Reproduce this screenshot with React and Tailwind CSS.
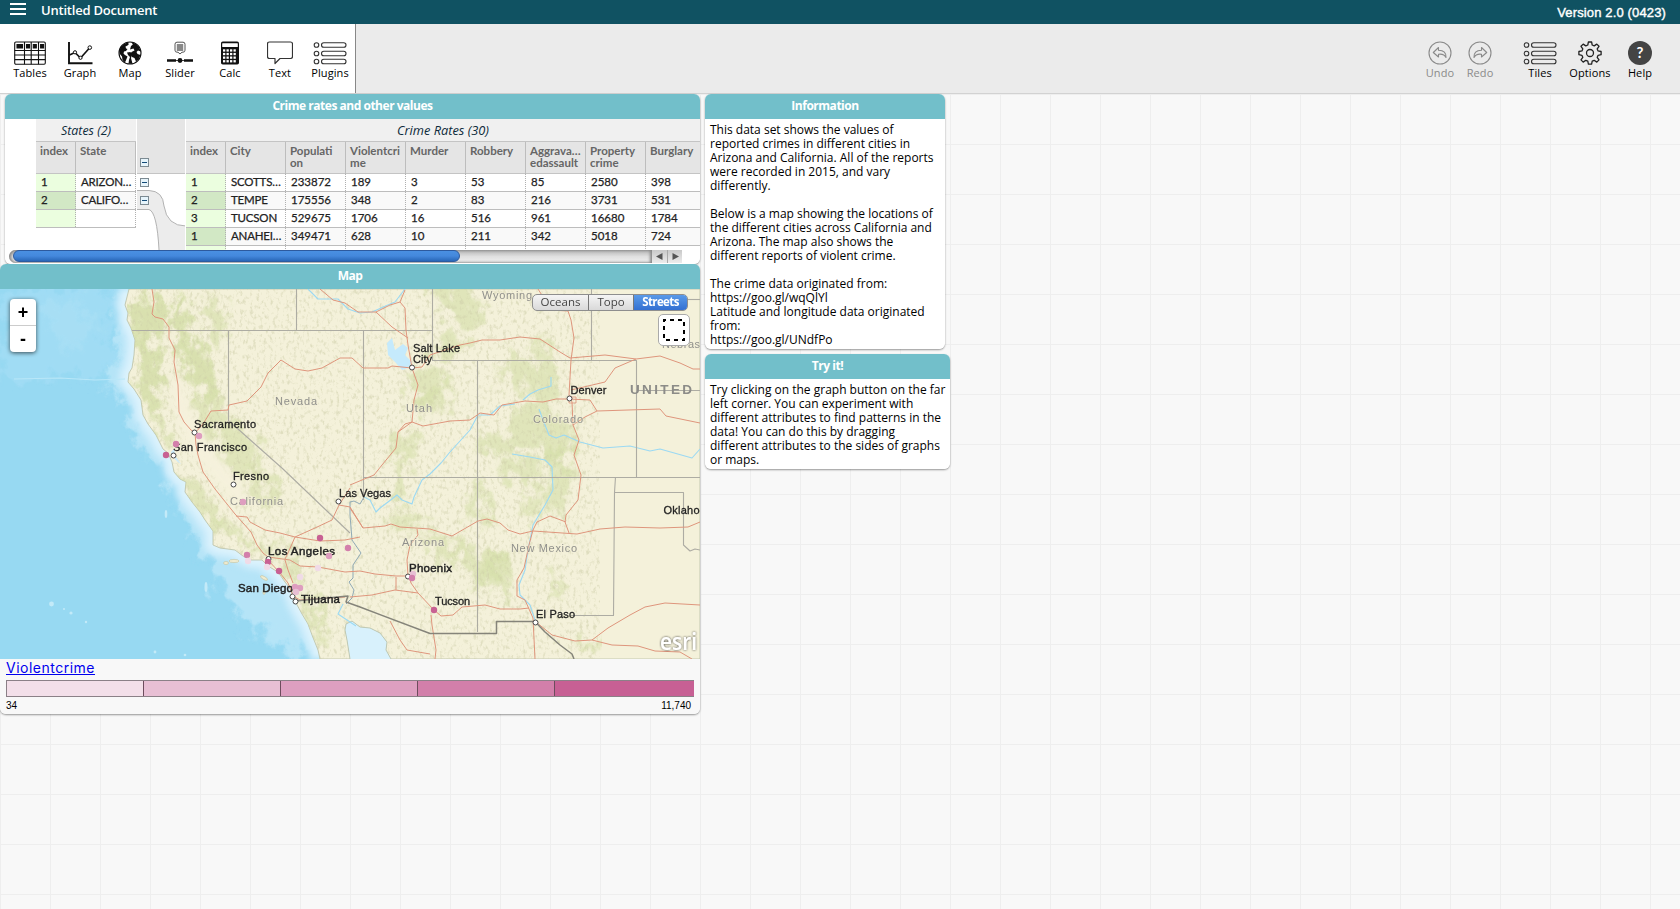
import React from "react";

const GREENS = [
  [148, 320, 20, 34, 8], [150, 375, 15, 40, -6], [160, 425, 10, 26, -25], [182, 325, 10, 34, 0], [200, 370, 16, 38, -25],
  [212, 412, 17, 28, -20], [238, 450, 20, 34, -30], [262, 490, 14, 30, -35], [198, 500, 14, 42, -38], [225, 530, 24, 10, 15],
  [262, 548, 22, 7, 5], [292, 570, 10, 22, -20], [318, 620, 9, 34, -25], [216, 320, 14, 30, 0], [460, 305, 34, 18, 30],
  [448, 345, 22, 12, 0], [425, 385, 22, 20, 0], [405, 450, 14, 26, 20], [435, 400, 24, 12, 0], [518, 370, 20, 24, 20],
  [545, 385, 16, 34, 0], [528, 425, 26, 24, 20], [560, 440, 16, 30, -10], [500, 445, 22, 14, 0], [520, 470, 28, 12, 0],
  [558, 478, 13, 40, 8], [535, 505, 9, 22, 0], [478, 505, 10, 28, 0], [410, 522, 26, 10, 0], [440, 548, 30, 11, 25],
  [478, 562, 28, 18, 30], [495, 575, 18, 22, 0], [556, 583, 6, 17, 0], [400, 488, 10, 22, 0], [545, 345, 8, 14, 0],
  [590, 648, 14, 8, 0],
];

const ROADS = [
  "152,289 154,302 152,314 155,317 163,319 169,327 169,338 175,350 174,362 178,385 179,412 184,422 191,430 195,433 196,445 198,455 200,462 203,472 215,489 235,514 251,532 257,545 263,553",
  "195,433 203,424 211,411 228,410 229,405 247,401 261,387 268,373 281,360 295,369 308,371 322,368 340,358 352,358 363,368 388,368 392,366 412,368",
  "320,289 333,300 345,303 358,312 376,312 390,305 400,302 405,290",
  "400,302 405,308 406,330 408,345 412,368 418,385 414,400 412,422 398,432 396,448 382,465 374,475 350,485",
  "376,312 392,327 408,338",
  "412,368 422,367 430,355 445,350 460,345 470,343 482,340 500,340 520,337 540,339 560,352 570,358 605,355 636,359 660,356 680,363 693,369 700,369",
  "538,289 545,300 550,310 568,311 571,320 574,338 571,360 569,395 572,402 573,425 579,440 574,455 581,475 578,500 566,515 565,522 569,533",
  "569,399 590,400 597,411 660,409 666,416 700,423",
  "573,425 585,417 597,411",
  "571,390 605,382 615,368 636,359",
  "398,432 405,424 412,422 423,426 450,421 470,420 480,413 494,415 502,405 525,401 543,402 556,399 569,399",
  "350,508 363,528 385,526 391,524 400,527 430,529 452,536 478,521 487,519 500,523 508,530 520,534 533,531 577,534 600,529 625,527 660,528 688,527 700,522",
  "533,530 537,522 550,516 566,522",
  "300,566 318,567 345,572 360,571 375,574 396,576 409,576",
  "409,576 411,583 418,593 433,609 441,616 453,615 462,607 485,605 500,609 520,609 529,608",
  "431,615 432,625 436,650 435,659",
  "350,597 372,595 395,590 418,593",
  "408,576 407,560 410,545 418,535 417,529",
  "396,590 396,577",
  "390,621 400,640 407,650 430,654",
  "533,530 529,545 524,568 517,580 517,596 525,600 533,618 535,659",
  "536,622 552,635 575,641 592,640 608,628 630,615 645,607 665,603 700,605",
  "592,640 612,645 638,646 655,651 680,652 692,659",
  "236,516 247,517 250,522 265,530 280,533 295,537 315,528 332,520 339,505 350,488",
  "295,537 320,541 345,540 360,537",
  "295,537 288,553 285,559",
  "263,553 268,557 290,560 300,566",
  "268,560 280,573 288,583 293,596 300,600 345,597",
  "285,560 288,570 293,583",
  "339,505 350,507 360,523 363,528",
];

const RIVERS = [
  "551,377 551,386 538,390 530,394 523,400",
  "515,404 500,406 490,415 478,415 470,430 450,452 441,463 430,474 422,480 414,497 412,504 402,500 397,495 388,502 380,508 376,512 370,500 364,497",
  "512,454 530,457 545,460 552,467 553,490 545,505 533,525 528,550 525,570 519,585 520,595 530,605 535,620",
  "539,409 543,420 549,435 556,438 564,435 580,442 603,448 630,446 650,451 660,449 692,458 700,449",
  "308,289 318,299 338,299 348,309 360,313 372,312 395,302 405,289",
  "343,604 338,614 350,622 356,626",
];

const BORDERS = [
  "132,330.5 432.5,330.5", "296.5,289 296.5,330", "228.5,330 228.5,421 238,429 283,469 350,533",
  "363.5,330 363.5,500", "432.5,289 432.5,360.5 636.5,360.5 636.5,477.5", "477.5,360 477.5,632",
  "363,477.5 700,477.5", "591.5,289 591.5,360", "688,299.5 700,299.5", "636,390.5 700,390.5",
  "615.5,477 614.5,492.5 613.5,615.5 571,615.5", "614,492.5 683.5,492.5 683.5,545 690,551 695,549 700,550",
];

const LAND =
  "M129 289L127 297L125 305L128 313L127 320L131 328L135 340L134 355L132 368L129 373L128 382L134 389L141 400L143 415L148 424L156 435L160 443L163 449L168 453L172 462L174 472L180 479L186 482L185 492L192 502L200 512L205 520L213 531L213 545L220 548L235 550L243 556L251 560L262 560L268 566L278 572L285 582L292 591L296 603L302 614L308 624L312 635L318 650L320 659L350 659L347 640L345 630L346 624L352 621L360 627L370 628L380 633L387 642L386 650L391 659L700 659L700 289Z";
const COAST = LAND.split("L350 659")[0];

const CITIES = [
  [412, 367.5], [569.5, 398.5], [194.5, 432.5], [173.5, 455.5], [233.5, 484.5], [338.5, 501.5],
  [268.5, 559], [408, 576.5], [292.5, 596.5], [295.5, 601.5], [535.5, 622.5],
];

const POINTS = [
  [199, 436, "#de9dbf"], [176, 444, "#d37fab"], [166, 455, "#c86193"], [243, 502, "#de9dbf"], [320, 538, "#c86193"],
  [348, 548, "#d37fab"], [329, 556, "#de9dbf"], [247, 555, "#d37fab"], [248, 561, "#f0dbe7"], [268, 562, "#c86193"],
  [267, 567, "#f0dbe7"], [279, 571, "#c86193"], [318, 568, "#f0dbe7"], [300, 577, "#f0dbe7"], [295, 587, "#de9dbf"],
  [300, 588, "#de9dbf"], [296, 592, "#e8bfd4"], [413, 574, "#e8bfd4"], [412, 578, "#d37fab"], [434, 610, "#c86193"],
];

const CITY_LABELS = [
  ["Salt Lake", 413, 352, 47, 11], ["City", 413, 363, 19, 11], ["Denver", 570.5, 394, 36, 11], ["Sacramento", 194, 428, 62, 11],
  ["San Francisco", 173, 451, 74, 11], ["Fresno", 233, 480, 36, 11], ["Las Vegas", 339, 497, 52, 11],
  ["Los Angeles", 268, 555, 67, 11.5], ["San Diego", 238, 592, 55, 11.5], ["Tijuana", 301, 603, 39, 11.5],
  ["Phoenix", 409, 572, 43, 11.5], ["Tucson", 435, 605, 35, 11], ["El Paso", 536, 618, 39, 11], ["Oklaho", 663.5, 514, 36, 11],
];

const STATE_LABELS = [
  ["Nevada", 275, 405, 42], ["Utah", 406, 412, 26], ["Colorado", 533, 423, 50], ["Wyoming", 482, 299, 50],
  ["California", 230, 505, 53], ["Arizona", 402, 546, 42], ["New Mexico", 511, 552, 66], ["Nebras", 662, 348, 38],
];

function MapView() {
  return (
    <svg className="block h-[370px] w-[700px]" viewBox="0 289 700 370" fontFamily="'Liberation Sans', Arial, sans-serif">
      <defs>
        <clipPath id="land"><path d={LAND} /></clipPath>
        <filter id="soft" x="-30%" y="-30%" width="160%" height="160%"><feGaussianBlur stdDeviation="3" /></filter>
        <filter id="sea" x="-30%" y="-30%" width="160%" height="160%"><feGaussianBlur stdDeviation="3" /></filter>
        <filter id="mottle" x="0" y="0" width="100%" height="100%">
          <feTurbulence type="fractalNoise" baseFrequency="0.07 0.06" numOctaves="5" seed="8" result="n" />
          <feDisplacementMap in="SourceGraphic" in2="n" scale="44" xChannelSelector="R" yChannelSelector="G" />
        </filter>
        <filter id="relief" x="0" y="0" width="100%" height="100%">
          <feTurbulence type="fractalNoise" baseFrequency="0.3 0.2" numOctaves="4" seed="3" />
          <feColorMatrix values="0 0 0 0 0.62  0 0 0 0 0.62  0 0 0 0 0.4  3.4 0 0 0 -1.75" />
        </filter>
        <filter id="halo" x="-20%" y="-20%" width="140%" height="150%">
          <feDropShadow dx="0" dy="0" stdDeviation="1.2" floodColor="#222" floodOpacity="0.9" />
        </filter>
      </defs>
      <rect x="0" y="289" width="700" height="370" fill="#97d9f2" />
      <g filter="url(#mottle)">
        <path d="M0 289H112L108 330L112 368L95 378L60 379L0 380Z" fill="#a0dcf4" filter="url(#sea)" />
        <path d="M45 305L72 298L98 318L92 340L70 352L48 335Z" fill="#aae0f5" opacity="0.7" filter="url(#sea)" />
        <path d="M118 289L118 350L105 380L125 405L140 445L165 470L178 500L195 540L215 575L240 620L285 650L330 659L330 560L200 480L150 400L140 289Z" fill="#b5e4f7" filter="url(#sea)" />
      </g>
      <g fill="none" strokeLinejoin="round" filter="url(#sea)">
        <path d={COAST} stroke="#cdecfb" strokeWidth="20" />
        <path d={COAST} stroke="#dff4fd" strokeWidth="8" />
      </g>
      <path d="M14 379L60 378L95 380L125 379" stroke="#b9e7f8" strokeWidth="1.2" fill="none" />
      <g fill="#c3eaf8"><circle cx="51.500" cy="604" r="2.4" /><circle cx="71" cy="613" r="1.6" /><circle cx="64" cy="609" r="1" /><circle cx="86" cy="622" r="1.2" /><circle cx="155" cy="652" r="1.4" /><circle cx="185" cy="655" r="1.3" /><ellipse cx="166" cy="514" rx="1.300" ry="4" /><ellipse cx="206" cy="587" rx="1.500" ry="5" /></g>
      <path d="M350 659L347 640L345 630L346 624L352 621L360 627L370 628L380 633L387 642L386 650L391 659Z" fill="#d8f1fc" />
      <path d={LAND} fill="#f4f1da" stroke="#b9bfa6" strokeWidth="0.8" />
      <g clipPath="url(#land)">
        <g filter="url(#mottle)">
          {GREENS.map(([x, y, rx, ry, a], i) => (
            <ellipse key={i} cx={x} cy={y} rx={rx * 0.85} ry={ry * 0.85} fill="#d2dda4" opacity={x < 215 && y < 400 ? 0.8 : 0.58} transform={`rotate(${a} ${x} ${y})`} filter="url(#soft)" />
          ))}
        </g>
        <rect x="120" y="289" width="480" height="370" filter="url(#relief)" opacity="0.55" />
        <path d="M178 372L186 395L196 425L215 455L245 490L240 505L215 480L190 448L176 415L170 385Z" fill="#f5f1dc" filter="url(#soft)" />
      </g>
      <g fill="#f0ecd0" stroke="#c5c3a0" strokeWidth="0.6">
        <ellipse cx="234" cy="561" rx="5" ry="1.6" /><ellipse cx="226" cy="563" rx="2.500" ry="1.500" />
        <ellipse cx="264" cy="578" rx="4" ry="1.500" transform="rotate(30 264 578)" /><ellipse cx="264" cy="592" rx="1.200" ry="2.500" />
      </g>
      <path d="M171 452L174 449L176 457L181 464L178 462L172 456Z" fill="#cbeafb" />
      <path d="M387 343L392 338L395 350L403 344L408 348L405 355L412 362L408 368L402 370L396 363L388 355Z" fill="#c5eafc" />
      <g fill="none" strokeLinejoin="round">
        {RIVERS.map((p) => <polyline key={p} points={p} stroke="#9bd9f3" strokeWidth="1.1" />)}
        <polyline points="364,497 360,504 354,501 350,502 350,515 352,540 361,553 353,565 353,578 349,582 354,590 352,598 346,604" stroke="#8fa9b5" strokeWidth="1" />
        {BORDERS.map((p) => <polyline key={p} points={p} stroke="#adaca3" strokeWidth="1.1" />)}
        {ROADS.map((p) => <polyline key={p} points={p} stroke="#de957c" strokeWidth="1" />)}
        <path d="M569 397h7v6h-7z" stroke="#de957c" strokeWidth="0.8" />
        <polyline points="296,601 348,596 346,602 360,607 430,633.500 496.500,633.500 496.500,621.500 535,621.500 545,632 560,645 572,654 574,659" stroke="#85847a" strokeWidth="1.5" />
      </g>
      {STATE_LABELS.map(([t, x, y, w]) => (
        <text key={t} x={x} y={y} textLength={w} fontSize="11" fill="#90908c" stroke="#f3f0d8" strokeWidth="1.500" strokeOpacity="0.5" paintOrder="stroke">{t}</text>
      ))}
      <text x="630" y="394" textLength="62" fontSize="13.500" fontWeight="bold" fill="#8c8c88">UNITED</text>
      {CITIES.map(([x, y]) => <circle key={x} cx={x} cy={y} r="2.500" fill="#fff" stroke="#444" strokeWidth="1" />)}
      {CITY_LABELS.map(([t, x, y, w, s]) => (
        <text key={t} x={x} y={y} textLength={w} fontSize={s} fill="#222" stroke="#222" strokeWidth={s > 11 ? 0.45 : 0.3}>{t}</text>
      ))}
      {POINTS.map(([x, y, c]) => <circle key={`${x}-${y}`} cx={x} cy={y} r="3.200" fill={c} />)}
      <text x="660" y="650" fontSize="22.500" fontWeight="600" fontFamily="'Open Sans', sans-serif" textLength="37" lengthAdjust="spacingAndGlyphs" fill="#fff" filter="url(#halo)">esri</text>
    </svg>
  );
}

const ListIcon = () => (
  <svg className="h-6 w-[34px]" viewBox="0 0 34 24" fill="none" stroke="#333" strokeWidth="1.1">
    {[4, 12.5, 20.5].map((y) => (
      <g key={y}><circle cx="3.500" cy={y} r="2.300" /><rect x="8.500" y={y - 2.300} width="24.500" height="4.600" rx="2.300" /></g>
    ))}
  </svg>
);

const ICONS = {
  tables: (
    <svg className="h-6 w-8" viewBox="0 0 32 24" fill="none" stroke="#111" strokeWidth="1.100">
      <rect x="0.700" y="1" width="30.600" height="22.300" rx="1.200" />
      <path d="M0.700 9.500H31.300M0.700 14H31.300M0.700 18.600H31.300M10.500 1V23.300M17.200 1V23.300M24.500 1V23.300" />
      <path d="M3 3.500h5.500v3.500h-5.500zM12.500 3.500h3v3.500h-3zM19.300 3.500h3v3.500h-3zM26.600 3.500h3v3.500h-3z" fill="#111" />
    </svg>
  ),
  graph: (
    <svg className="h-6 w-[26px]" viewBox="0 0 26 24" fill="none" stroke="#111">
      <path d="M2 1V22.200H25.500" strokeWidth="1.900" />
      <path d="M2.500 14L8 11.500L13.500 17L22.500 7" strokeWidth="1.600" />
      <circle cx="8" cy="11.300" r="1.600" fill="#fff" /><circle cx="13.500" cy="16.800" r="1.600" fill="#fff" /><circle cx="22.800" cy="6.600" r="1.800" fill="#fff" />
    </svg>
  ),
  map: (
    <svg className="h-6 w-6" viewBox="0 0 24 24">
      <circle cx="12" cy="12" r="11" fill="#fff" stroke="#111" strokeWidth="1.100" />
      <path d="M3 5.500L6 3L9.500 1.500L11 3L9.500 4.500L7.500 5.500L8 7.500L9.500 8L8 10L6 10.500L5.500 12.500L7 14L9.500 15.500L8.500 18L7 21.500L4.500 19L4 15.500L1.500 12.500L1.300 9Z" fill="#111" />
      <path d="M13.500 1.300L18 2.800L21 6L22.800 10.500L20 9.500L18.500 11L19.500 13L22.500 14L20.500 18.500L18 20.500L16.500 17L14 16L12.500 13L13.500 11L16.500 9.500L15.500 7.500L12 8.500L13 5L14.800 3.500Z" fill="#111" />
      <path d="M9 11.500L12.500 11L14 14L13 17L14.500 22.800H10.500L11 19L12 16L10 14Z" fill="#111" />
    </svg>
  ),
  slider: (
    <svg className="h-6 w-[26px]" viewBox="0 0 26 24">
      <path d="M10 1.200h6q2 0 2 2v6q0 2-2 2h-1l-2 1.800-2-1.800h-1q-2 0-2-2v-6q0-2 2-2Z" fill="#fff" stroke="#555" />
      <rect x="9.800" y="3" width="6.400" height="7" fill="#888" />
      <path d="M0 19.500H9M17 19.500H26" stroke="#111" strokeWidth="2.400" /><path d="M8 19.500H18" stroke="#111" strokeWidth="0.800" />
      <circle cx="13" cy="19.500" r="2.400" fill="#111" />
    </svg>
  ),
  calc: (
    <svg className="h-6 w-5" viewBox="0 0 20 24">
      <rect x="1" y="0.500" width="18" height="23" rx="1.800" fill="#111" /><rect x="2.200" y="2.300" width="15.600" height="3.800" rx="0.500" fill="#fff" />
      {[9, 12.600, 16.200, 19.800].map((y) => [3, 6.500, 10, 13.500].map((x) => <rect key={`${x}-${y}`} x={x} y={y - 0.700} width="2.300" height="2.300" fill="#fff" />))}
    </svg>
  ),
  text: (
    <svg className="h-6 w-[26px]" viewBox="0 0 26 24" fill="none" stroke="#333" strokeWidth="1.200">
      <path d="M2.500 1h21q2 0 2 2v12.500q0 2-2 2H13L8 22.500V17.500H2.500q-2 0-2-2V3q0-2 2-2Z" strokeLinejoin="round" />
    </svg>
  ),
  list: <ListIcon />,
  undo: (
    <svg className="h-6 w-6" viewBox="0 0 24 24" fill="none" stroke="#8a8a8a" strokeWidth="1.100">
      <circle cx="12" cy="12" r="11" /><path d="M10.500 6.500L5.300 11.500L10.500 16V13.300Q16 12.500 18 16.500Q18.500 9.500 10.500 9.200Z" strokeLinejoin="round" />
    </svg>
  ),
  redo: (
    <svg className="h-6 w-6 -scale-x-100" viewBox="0 0 24 24" fill="none" stroke="#8a8a8a" strokeWidth="1.100">
      <circle cx="12" cy="12" r="11" /><path d="M10.500 6.500L5.300 11.500L10.500 16V13.300Q16 12.500 18 16.500Q18.500 9.500 10.500 9.200Z" strokeLinejoin="round" />
    </svg>
  ),
  options: (
    <svg className="h-6 w-6" viewBox="0 0 24 24" fill="none" stroke="#222" strokeWidth="1.300" strokeLinejoin="round">
      <path d="M10.400 1h3.200l.6 3 2 .9 2.600-1.800 2.200 2.200-1.800 2.600.9 2 3 .6v3.200l-3 .6-.9 2 1.800 2.600-2.200 2.200-2.600-1.800-2 .9-.6 3h-3.200l-.6-3-2-.9-2.600 1.800-2.200-2.200 1.800-2.600-.9-2-3-.6v-3.200l3-.6.9-2-1.800-2.600 2.200-2.200 2.600 1.800 2-.9z" />
      <circle cx="12" cy="12" r="3.500" />
    </svg>
  ),
  help: (
    <svg className="h-6 w-6" viewBox="0 0 24 24">
      <circle cx="12" cy="12" r="12" fill="#444" />
      <text x="12" y="17.300" textAnchor="middle" fontFamily="Lato, sans-serif" fontWeight="bold" fontSize="15" fill="#fff">?</text>
    </svg>
  ),
};

function Tool({ icon, label, width = "w-[50px]", muted }) {
  return (
    <div className={`flex ${width} flex-col items-center pt-[17px] font-['Open_Sans',sans-serif] text-[11px] leading-[15px] tracking-[0.1px] ${muted ? "text-[#8a8a8a]" : "text-black"}`}>
      {ICONS[icon]}
      <span className="whitespace-nowrap">{label}</span>
    </div>
  );
}

function Card({ title, className, children }) {
  return (
    <section className={`flex flex-col overflow-hidden rounded-[6px] shadow-[0_1px_2px_rgba(0,0,0,0.4)] ${className}`}>
      <h2 className="h-[25px] shrink-0 bg-[#72bfca] text-center font-['Open_Sans',sans-serif] text-[12px] font-bold leading-[23px] tracking-[-0.48px] text-white">{title}</h2>
      {children}
    </section>
  );
}

const Collapse = () => (
  <span className="flex size-[7px] items-center justify-center bg-[#e6f4fb] outline outline-1 outline-[#7c8a92]"><span className="h-px w-[5px] bg-[#134a78]" /></span>
);

function HeadCell({ lines, w = "w-[60px]" }) {
  return (
    <div className={`${w} h-8 shrink-0 overflow-hidden whitespace-nowrap border-r border-[#bdbdbd] pl-[4px] pt-[3px] leading-3`}>
      {lines.map((l) => <div key={l}>{l}</div>)}
    </div>
  );
}

function Row({ cells, odd }) {
  return (
    <div className={`flex h-[18px] border-b border-[#bdbdbd] [-webkit-text-stroke:0.250px_#222] ${odd ? "bg-[#f9f9f9]" : "bg-white"}`}>
      {cells.map((c, i) => (
        <div
          key={i}
          className={`${i === 0 ? "w-10" : "w-[60px]"} ${i === 0 ? (odd ? "bg-[#d2e8c5]" : "bg-[#ebfedf]") : ""} shrink-0 overflow-hidden whitespace-nowrap border-r border-dotted border-[#b0b0b0] pl-[5px] leading-[15px]`}
        >
          <span className={/[A-Z]/.test(c) ? "tracking-[-0.2px]" : ""}>{c}</span>
        </div>
      ))}
    </div>
  );
}

const HEADS = [["City"], ["Populati", "on"], ["Violentcri", "me"], ["Murder"], ["Robbery"], ["Aggrava…", "edassault"], ["Property", "crime"], ["Burglary"]];
const ROWS = [
  ["1", "SCOTTS…", "233872", "189", "3", "53", "85", "2580", "398"],
  ["2", "TEMPE", "175556", "348", "2", "83", "216", "3731", "531"],
  ["3", "TUCSON", "529675", "1706", "16", "516", "961", "16680", "1784"],
  ["1", "ANAHEI…", "349471", "628", "10", "211", "342", "5018", "724"],
  ["", "", "", "", "", "", "", "", ""],
];

function CaseTable() {
  return (
    <div className="flex h-[145px] flex-col bg-white">
      <div className="flex h-[131px] overflow-hidden pl-[31px] font-['Lato',sans-serif] text-[11.5px] text-[#222]">
        <div className="w-[100px] shrink-0">
          <div className="h-[22px] bg-[#f0f0f0] text-center font-['Open_Sans',sans-serif] text-[12.4px] italic leading-[23px] text-[#0d2b3b]">States (2)</div>
          <div className="flex h-[33px] border-y border-[#c4c4c4] bg-[#e5e5e5] font-bold text-[#666]">
            <HeadCell w="w-10" lines={["index"]} /><HeadCell lines={["State"]} />
          </div>
          <Row cells={["1", "ARIZON…"]} /><Row odd cells={["2", "CALIFO…"]} /><Row cells={["", ""]} />
        </div>
        <div className="ml-px flex w-[49px] shrink-0 flex-col border-r border-white">
          <div className="flex h-[55px] items-end border-b border-[#c4c4c4] bg-[#e5e5e5] pb-[7px] pl-[4px]"><Collapse /></div>
          <div className="relative h-[76px]">
            <svg className="absolute inset-0 h-[76px] w-[48px]" viewBox="0 0 48 76">
              <path d="M0 16.500H12Q26 17 27 32Q30 52 49 52V76H22Q20 38 12 35.500H0Z" fill="#ececec" />
              <path d="M0 16.500H12Q26 17 27 32Q30 52 49 52M0 35.500H12Q20 38 22 76" fill="none" stroke="#aaa" strokeWidth="0.900" />
            </svg>
            <div className="relative flex flex-col gap-[11px] pl-[4px] pt-[5px]"><Collapse /><Collapse /></div>
          </div>
        </div>
        <div className="w-[514px] shrink-0 overflow-hidden">
          <div className="h-[22px] bg-[#f0f0f0] text-center font-['Open_Sans',sans-serif] text-[12.8px] italic leading-[23px] text-[#0d2b3b]">Crime Rates (30)</div>
          <div className="flex h-[33px] border-y border-[#c4c4c4] bg-[#e5e5e5] font-bold text-[#666]">
            <HeadCell w="w-10" lines={["index"]} />
            {HEADS.map((h) => <HeadCell key={h[0]} lines={h} />)}
          </div>
          {ROWS.map((r, i) => <Row key={i} cells={r} odd={i === 1 || i === 3} />)}
        </div>
      </div>
      <div className="flex h-[14px] pl-[4px]">
        <div className="h-[13px] w-[643px] rounded-l-full rounded-r-md bg-linear-to-b from-[#b4b4b4] via-[#e0e0e0] to-[#f1f1f1] pl-[4px] shadow-[inset_-2px_0_3px_#888,inset_2px_0_3px_#888]">
          <div className="h-[12px] w-[447px] rounded-full border border-[#2d5a9e] bg-linear-to-b from-[#4a90e2] via-[#4488dc] to-[#2967b8]" />
        </div>
        <div className="flex h-[13px] w-[30px] bg-linear-to-b from-[#c9c9c9] to-[#ececec]">
          <span className="flex w-[16px] items-center justify-center border-r border-[#aaa]"><svg className="size-[7px]" viewBox="0 0 7 7"><path d="M6.500 0V7L0 3.500Z" fill="#555" /></svg></span>
          <span className="flex w-[14px] items-center justify-center"><svg className="size-[7px]" viewBox="0 0 7 7"><path d="M0.500 0V7L7 3.500Z" fill="#555" /></svg></span>
        </div>
      </div>
    </div>
  );
}

function Lines({ lines }) {
  return (
    <div className="grow whitespace-nowrap bg-white pl-[5px] pt-[4px] font-['Open_Sans',sans-serif] text-[12px] leading-[14px] text-black">
      {lines.map((t, i) => <div key={i} className="h-[14px]">{t}</div>)}
    </div>
  );
}

const INFO = [
  "This data set shows the values of", "reported crimes in different cities in", "Arizona and California. All of the reports",
  "were recorded in 2015, and vary", "differently.", "", "Below is a map showing the locations of",
  "the different cities across California and", "Arizona. The map also shows the", "different reports of violent crime.", "",
  "The crime data originated from:", "https://goo.gl/wqQlYl", "Latitude and longitude data originated", "from:", "https://goo.gl/UNdfPo",
];
const TRY = [
  "Try clicking on the graph button on the far", "left corner. You can experiment with", "different attributes to find patterns in the",
  "data! You can do this by dragging", "different attributes to the sides of graphs", "or maps.",
];

export default function App() {
  return (
    <div className="flex h-[909px] w-[1680px] flex-col overflow-hidden bg-[#f8f8f8]">
      <header className="flex h-6 shrink-0 justify-between bg-[#105262] pl-[10px] pr-[14px] text-white">
        <div className="flex">
          <div className="mt-[3px] flex h-[12px] w-4 flex-col justify-between"><i className="h-[2px] bg-white" /><i className="h-[2px] bg-white" /><i className="h-[2px] bg-white" /></div>
          <h1 className="ml-[15px] font-['Open_Sans',sans-serif] text-[13px] font-semibold leading-[20px] tracking-[-0.22px]">Untitled Document</h1>
        </div>
        <span className="font-['Liberation_Sans',Arial,sans-serif] text-[13px] leading-[25px] tracking-[0.14px] [-webkit-text-stroke:0.400px_white]">Version 2.0 (0423)</span>
      </header>
      <nav className="flex h-[70px] shrink-0 justify-between border-b border-[#d2d2d2] bg-[#ebebeb] pr-[15px]">
        <div className="flex w-[356px] border-r border-[#888] bg-white pl-[5px]">
          <Tool icon="tables" label="Tables" /><Tool icon="graph" label="Graph" /><Tool icon="map" label="Map" /><Tool icon="slider" label="Slider" />
          <Tool icon="calc" label="Calc" /><Tool icon="text" label="Text" /><Tool icon="list" label="Plugins" />
        </div>
        <div className="flex">
          <Tool icon="undo" label="Undo" width="w-10" muted /><Tool icon="redo" label="Redo" width="w-10" muted />
          <div className="w-[15px]" />
          <Tool icon="list" label="Tiles" /><Tool icon="options" label="Options" /><Tool icon="help" label="Help" />
        </div>
      </nav>
      <main className="flex grow gap-[5px] bg-[linear-gradient(to_right,#eeeeee_1px,transparent_1px),linear-gradient(to_bottom,#eeeeee_1px,transparent_1px)] bg-size-[50px_50px]">
        <div className="w-[700px]">
          <Card title="Crime rates and other values" className="ml-[5px] h-[170px]"><CaseTable /></Card>
          <Card title="Map" className="h-[450px]">
            <div className="relative">
              <MapView />
              <div className="absolute left-[10px] top-[10px] w-[26px] rounded-[4px] bg-white text-center font-['Liberation_Sans',Arial,sans-serif] text-[18px] font-bold leading-[26px] text-black shadow-[0_1px_4px_rgba(0,0,0,0.65)]">
                <div className="h-[27px] border-b border-[#ccc]">+</div><div className="h-[26px]">-</div>
              </div>
              <div className="absolute left-[532px] top-[5px] flex h-[17px] w-[156px] overflow-hidden rounded-[5px] border border-[#8e8e8e] bg-linear-to-b from-[#f5f5f5] to-[#d9d9d9] font-['Open_Sans',sans-serif] text-[11.500px] leading-[14px] text-[#444]">
                <span className="w-[56px] border-r border-[#777] text-center">Oceans</span>
                <span className="w-[45px] border-r border-[#777] text-center">Topo</span>
                <span className="grow bg-linear-to-b from-[#5a9ae8] to-[#3370d2] text-center font-bold tracking-[-0.600px] text-white">Streets</span>
              </div>
              <div className="absolute left-[658px] top-[25px] flex size-[32px] items-center justify-center rounded-[5px] border border-[#aaa] bg-white">
                <svg className="size-6" viewBox="0 0 24 24"><rect x="2" y="2" width="20" height="20" fill="none" stroke="#000" strokeWidth="2" strokeDasharray="4 4" strokeDashoffset="2" /></svg>
              </div>
            </div>
            <div className="flex grow flex-col bg-[#f8f8f8] px-[6px]">
              <a className="h-[21px] self-start font-['Inter',sans-serif] text-[14px] leading-[18px] tracking-[0.5px] text-[#0000ee] underline">Violentcrime</a>
              <div className="flex h-[17px] border-y border-l border-[#8b8087]">
                <i className="w-[137px] border-r border-[#6d4c5d] bg-[#f3dfe9]" /><i className="w-[137px] border-r border-[#6d4c5d] bg-[#e8bfd4]" />
                <i className="w-[137px] border-r border-[#6d4c5d] bg-[#dd9fc0]" /><i className="w-[137px] border-r border-[#6d4c5d] bg-[#d27faa]" /><i className="grow bg-[#c76094]" />
              </div>
              <div className="flex justify-between pr-[3px] font-['Liberation_Sans',Arial,sans-serif] text-[10px] leading-[17px] text-black"><span>34</span><span>11,740</span></div>
            </div>
          </Card>
        </div>
        <div className="flex flex-col gap-[5px]">
          <Card title="Information" className="h-[255px] w-[240px]"><Lines lines={INFO} /></Card>
          <Card title="Try it!" className="h-[115px] w-[245px]"><Lines lines={TRY} /></Card>
        </div>
      </main>
    </div>
  );
}
